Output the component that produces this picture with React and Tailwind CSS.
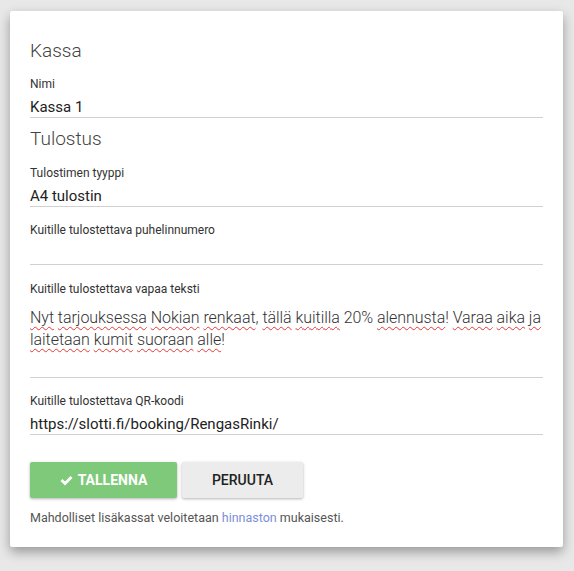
import React from "react";

const W = ({ children }) => (
  <span className="underline decoration-wavy decoration-[#e53935] decoration-1 underline-offset-[3px]">{children}</span>
);

function Label({ children }) {
  return <div className="text-[12px] leading-[14px] text-[#333]">{children}</div>;
}

function Field({ label, value }) {
  return (
    <div className="flex flex-col">
      <Label>{label}</Label>
      <div className="border-b border-[#d0d0d0] pt-[6px] text-[15px] leading-[20px] text-[#222]">{value}</div>
    </div>
  );
}

export default function App() {
  return (
    <div className="min-h-[571px] w-[574px] bg-[#e8e8e8] pt-[11px] pl-[10px]" style={{ fontFamily: "Roboto, 'Liberation Sans', sans-serif" }}>
      <div className="w-[553px] h-[536px] rounded-[2px] bg-white px-5 pt-[28px] shadow-[0_5px_12px_rgba(0,0,0,0.35)]">
        <div className="text-[19px] font-light leading-[24px] text-[#444]">Kassa</div>
        <div className="mt-[14px]">
          <Field label="Nimi" value="Kassa 1" />
        </div>
        <div className="mt-[9px] text-[19px] font-light leading-[24px] text-[#444]">Tulostus</div>
        <div className="mt-[15px]">
          <Field label="Tulostimen tyyppi" value="A4 tulostin" />
        </div>
        <div className="mt-[16px]">
          <Label>Kuitille tulostettava puhelinnumero</Label>
          <div className="h-[28px] border-b border-[#d0d0d0]" />
        </div>
        <div className="mt-[17px]">
          <Label>Kuitille tulostettava vapaa teksti</Label>
          <div className="h-[82px] border-b border-[#d0d0d0] pt-[11px] text-[16px] font-light leading-[22px] tracking-[-0.05px] text-[#333]">
            <W>Nyt</W> <W>tarjouksessa</W> <W>Nokian</W> <W>renkaat</W>, <W>tällä</W> <W>kuitilla</W> 20% <W>alennusta</W>! <W>Varaa</W> <W>aika</W> <W>ja</W>{" "}
            <W>laitetaan</W> <W>kumit</W> <W>suoraan</W> <W>alle</W>!
          </div>
        </div>
        <div className="mt-[16px]">
          <Field label="Kuitille tulostettava QR-koodi" value="https://slotti.fi/booking/RengasRinki/" />
        </div>
        <div className="mt-[27px] flex gap-[5px]">
          <button className="flex h-[36px] w-[147px] items-center justify-center gap-[5px] rounded-[2px] bg-[#7fc97b] text-[14px] font-bold text-white shadow-[0_1px_3px_rgba(0,0,0,0.3)]">
            <svg width="13" height="11" viewBox="0 0 13 11" fill="white"><path d="M0.5 6 L2.5 4 L5 6.5 L10.5 1 L12.5 3 L5 10.5 Z" /></svg>
            TALLENNA
          </button>
          <button className="flex h-[36px] w-[121px] items-center justify-center rounded-[2px] bg-[#ececec] text-[14px] font-medium text-[#222] shadow-[0_1px_3px_rgba(0,0,0,0.3)]">
            PERUUTA
          </button>
        </div>
        <div className="mt-[12px] text-[12.5px] leading-[16px] text-[#555]">
          Mahdolliset lisäkassat veloitetaan <span className="text-[#7b8ed8]">hinnaston</span> mukaisesti.
        </div>
      </div>
    </div>
  );
}
